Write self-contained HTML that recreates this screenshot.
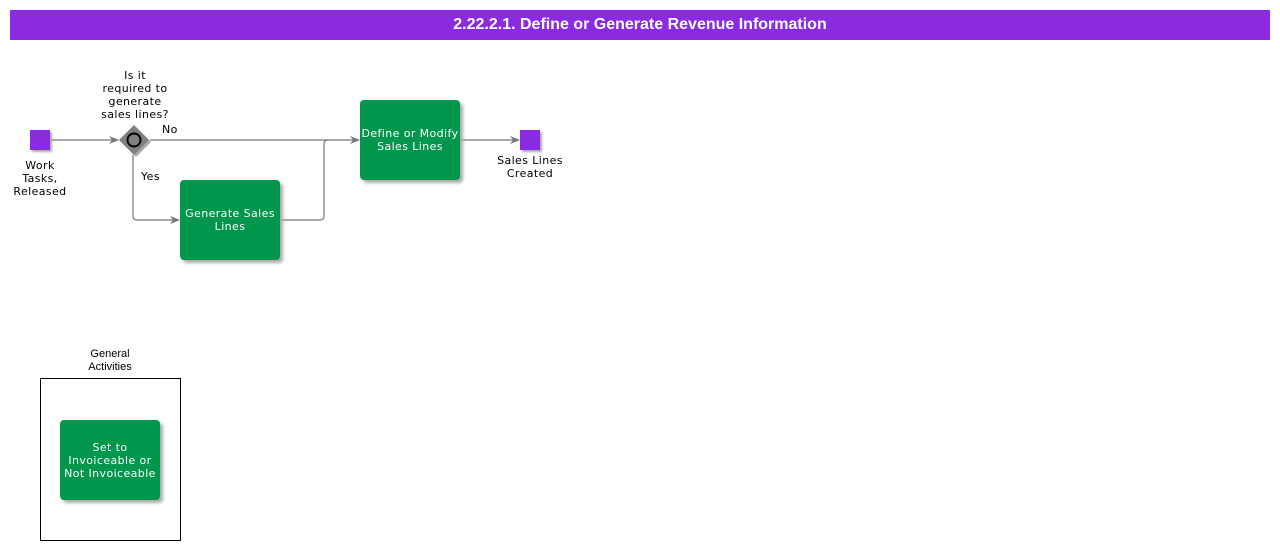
<!DOCTYPE html>
<html><head><style>
body{margin:0;width:1280px;height:550px;background:#fff;position:relative;font-family:"DejaVu Sans","Liberation Sans",sans-serif;overflow:hidden}
.hdr{position:absolute;left:10px;top:10px;width:1260px;height:30px;background:#8a2be2;color:#fff;font:bold 16px "Liberation Sans",sans-serif;text-align:center;line-height:30px}
.t{position:absolute;font-size:11px;color:#000;text-align:center;line-height:13px;letter-spacing:0.4px}
.box{position:absolute;background:#00964b;border-radius:4px;box-shadow:3px 3px 3px #aaa;color:#fff;font-size:11px;line-height:13px;letter-spacing:0.4px;display:flex;align-items:center;justify-content:center;text-align:center}
.ev{position:absolute;width:20px;height:20px;background:#8a2be2;box-shadow:2px 2px 2px #aaa}
</style></head><body>
<div class="hdr">2.22.2.1. Define or Generate Revenue Information</div>
<svg width="1280" height="550" style="position:absolute;left:0;top:0">
<defs><marker id="a" markerWidth="10" markerHeight="8" refX="9" refY="4" orient="auto" markerUnits="userSpaceOnUse"><path d="M0,0 L10,4 L0,8 L3,4z" fill="#777"/></marker></defs>
<g stroke="#777" stroke-width="1.2" fill="none">
<path d="M50,140 H118" marker-end="url(#a)"/>
<path d="M150,140 H359" marker-end="url(#a)"/>
<path d="M133,155 V216 Q133,220 137,220 H179" marker-end="url(#a)"/>
<path d="M280,220 H320 Q324,220 324,216 V144 Q324,140 328,140"/>
<path d="M460,140 H519" marker-end="url(#a)"/>
</g>
<polygon points="136,127 151,142 136,157 121,142" fill="#aaa"/>
<polygon points="134,125 149,140 134,155 119,140" fill="#808080"/>
<circle cx="134" cy="140" r="6.5" fill="none" stroke="#000" stroke-width="2"/>
<rect x="40.5" y="378.5" width="140" height="162" fill="none" stroke="#000"/>
</svg>
<div class="ev" style="left:30px;top:130px"></div>
<div class="ev" style="left:520px;top:130px"></div>
<div class="t" style="left:0;top:159px;width:80px">Work<br>Tasks,<br>Released</div>
<div class="t" style="left:85px;top:69px;width:100px">Is it<br>required to<br>generate<br>sales lines?</div>
<div class="t" style="left:162px;top:123px">No</div>
<div class="t" style="left:141px;top:170px">Yes</div>
<div class="t" style="left:480px;top:154px;width:100px">Sales Lines<br>Created</div>
<div class="box" style="left:180px;top:180px;width:100px;height:80px">Generate Sales<br>Lines</div>
<div class="box" style="left:360px;top:100px;width:100px;height:80px">Define or Modify<br>Sales Lines</div>
<div class="box" style="left:60px;top:420px;width:100px;height:80px">Set to<br>Invoiceable or<br>Not Invoiceable</div>
<div class="t" style="left:60px;top:348px;width:100px;font-family:'Liberation Sans',sans-serif;letter-spacing:0">General<br>Activities</div>
</body></html>
